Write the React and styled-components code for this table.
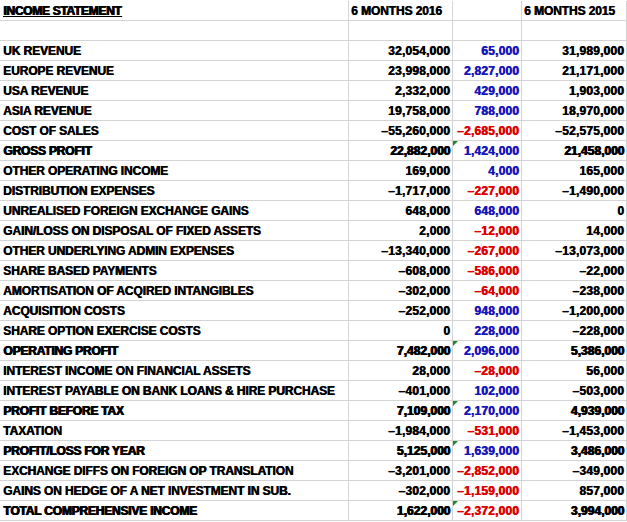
import React from 'react';
import styled, { createGlobalStyle, css } from 'styled-components';

const GlobalStyle = createGlobalStyle`
  html, body {
    margin: 0;
    padding: 0;
    background: #ffffff;
  }
  body {
    font-family: "Liberation Sans", Arial, sans-serif;
  }
`;

const Sheet = styled.div`
  width: 627px;
  padding-top: 1px;
  background: #fff;
`;

const Row = styled.div`
  display: grid;
  grid-template-columns: 349px 104px 69px 105px;
  height: 20px;
`;

const Cell = styled.div`
  position: relative;
  box-sizing: border-box;
  height: 20px;
  border-right: 1px solid #d4d4d4;
  border-bottom: 1px solid #d4d4d4;
  padding: 1px 3px 0 3px;
  font-size: 12px;
  font-weight: 700;
  line-height: 19px;
  white-space: nowrap;
  overflow: hidden;
  color: ${p => (p.$tone === 'up' ? '#1616b8' : p.$tone === 'down' ? '#dc0000' : '#000')};
  text-align: ${p => (p.$num ? 'right' : 'left')};
  text-shadow: 0.6px 0 0 currentColor;
  letter-spacing: ${p => (p.$num ? '0.2px' : '-0.1px')};
  ${p => p.$heavy && css`
    text-shadow: 0.5px 0 0 currentColor, 1px 0 0 currentColor;
    letter-spacing: ${p.$num ? '0px' : '-0.2px'};
  `}
  ${p => p.$num && css`padding-right: 2px;`}
  ${p => p.$head && css`padding-left: 2px;`}
`;

const Title = styled.span`
  text-decoration: underline;
  text-underline-offset: 1px;
  letter-spacing: -0.3px;
  text-shadow: 0.5px 0 0 currentColor, 1px 0 0 currentColor;
`;

const Flag = styled.span`
  position: absolute;
  top: 0;
  left: 0;
  width: 0;
  height: 0;
  border-top: 5px solid #1e8c1e;
  border-right: 5px solid transparent;
`;

const rows = [
  ['UK REVENUE', '32,054,000', '65,000', '31,989,000'],
  ['EUROPE REVENUE', '23,998,000', '2,827,000', '21,171,000'],
  ['USA REVENUE', '2,332,000', '429,000', '1,903,000'],
  ['ASIA REVENUE', '19,758,000', '788,000', '18,970,000'],
  ['COST OF SALES', '–55,260,000', '–2,685,000', '–52,575,000'],
  ['GROSS PROFIT', '22,882,000', '1,424,000', '21,458,000', true],
  ['OTHER OPERATING INCOME', '169,000', '4,000', '165,000'],
  ['DISTRIBUTION EXPENSES', '–1,717,000', '–227,000', '–1,490,000'],
  ['UNREALISED FOREIGN EXCHANGE GAINS', '648,000', '648,000', '0'],
  ['GAIN/LOSS ON DISPOSAL OF FIXED ASSETS', '2,000', '–12,000', '14,000'],
  ['OTHER UNDERLYING ADMIN EXPENSES', '–13,340,000', '–267,000', '–13,073,000'],
  ['SHARE BASED PAYMENTS', '–608,000', '–586,000', '–22,000'],
  ['AMORTISATION OF ACQIRED INTANGIBLES', '–302,000', '–64,000', '–238,000'],
  ['ACQUISITION COSTS', '–252,000', '948,000', '–1,200,000'],
  ['SHARE OPTION EXERCISE COSTS', '0', '228,000', '–228,000'],
  ['OPERATING PROFIT', '7,482,000', '2,096,000', '5,386,000', true],
  ['INTEREST INCOME ON FINANCIAL ASSETS', '28,000', '–28,000', '56,000'],
  ['INTEREST PAYABLE ON BANK LOANS & HIRE PURCHASE', '–401,000', '102,000', '–503,000'],
  ['PROFIT BEFORE TAX', '7,109,000', '2,170,000', '4,939,000', true],
  ['TAXATION', '–1,984,000', '–531,000', '–1,453,000'],
  ['PROFIT/LOSS FOR YEAR', '5,125,000', '1,639,000', '3,486,000', true],
  ['EXCHANGE DIFFS ON FOREIGN OP TRANSLATION', '–3,201,000', '–2,852,000', '–349,000'],
  ['GAINS ON HEDGE OF A NET INVESTMENT IN SUB.', '–302,000', '–1,159,000', '857,000'],
  ['TOTAL COMPREHENSIVE INCOME', '1,622,000', '–2,372,000', '3,994,000', true],
];

export default function App() {
  return (
    <>
      <GlobalStyle />
      <Sheet>
        <Row>
          <Cell><Title>INCOME STATEMENT</Title></Cell>
          <Cell $head>6 MONTHS 2016</Cell>
          <Cell />
          <Cell $head>6 MONTHS 2015</Cell>
        </Row>
        <Row>
          <Cell />
          <Cell />
          <Cell />
          <Cell />
        </Row>
        {rows.map(([label, now, diff, prev, heavy]) => (
          <Row key={label}>
            <Cell $heavy={heavy}>{label}</Cell>
            <Cell $num $heavy={heavy}>{now}</Cell>
            <Cell $num $tone={diff.startsWith('–') ? 'down' : 'up'}>
              {heavy && <Flag />}
              {diff}
            </Cell>
            <Cell $num $heavy={heavy}>{prev}</Cell>
          </Row>
        ))}
      </Sheet>
    </>
  );
}
